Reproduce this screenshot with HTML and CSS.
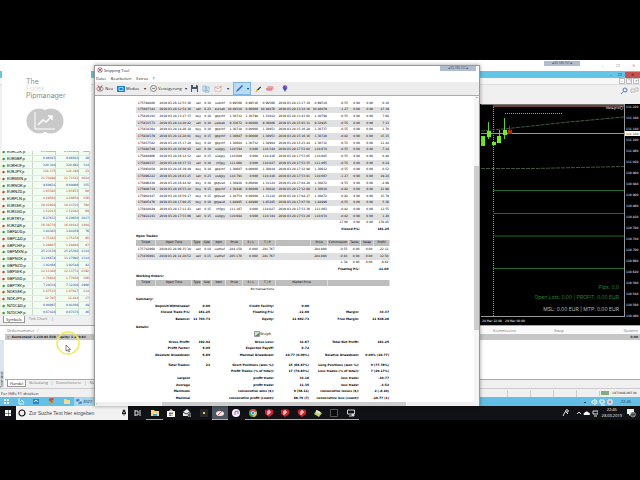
FILE: index.html
```html
<!DOCTYPE html>
<html lang="de">
<head>
<meta charset="utf-8">
<title>Snipping Tool</title>
<link rel="stylesheet" href="styles.css">
</head>
<body>
<main class="desktop">
  <section class="terminal">
    <header class="remote-bar"><button>–</button><button>❐</button><button>✕</button></header>
    <header class="app-title"><button>–</button><button>❐</button><button class="close">✕</button></header>
    <div class="app-menu"><button>–</button><button>❐</button><button>✕</button></div>
    <div class="app-tools">
      <svg width="18" height="8" viewBox="0 0 18 8" fill="none"><circle cx="4" cy="3" r="2" stroke="#5579b5"/><path d="M2.500 4.500L0 7" stroke="#5579b5"/><path d="M10 5V2h4v3h-3l-1 1M14 1h3v3h-2" stroke="#bbb"/></svg>
    </div>
    <div class="workspace">
      <aside class="watch">
        <table class="symbols"><tbody id="symbols"></tbody></table>
        <nav class="tabs"><button class="on">Symbols</button><button>Tick Chart</button><span>|</span></nav>
      </aside>
      <div class="chart"><svg id="chart" width="159" height="220" viewBox="481 104 159 220"></svg></div>
    </div>
    <div class="orders">
      <div class="orders-head"><span class="first">Ordernummer &nbsp; ⁄</span><span class="kom">Kommission</span><span class="swap">Swap</span><span class="gain">Gewinn</span></div>
      <div class="orders-sum"><b>○ &nbsp;Kontostand: 1 219.84 EUR &nbsp;Equity: 1 219.84</b><b>0.00</b></div>
      <div class="orders-body"></div>
      <nav class="tabs low"><button class="on">Handel</button><button>Belastung</button><span>|</span><button>Kontohistorie</button><span>|</span><button>Nachr</button></nav>
      <span class="side-label">Terminal</span>
    </div>
    <footer class="status"><span>For Hilfe F1 drücken</span><i></i><i></i><i></i><i></i><span class="net"><svg width="8" height="4"><path d="M0 0h8v4H0z" fill="#5d8b5d"/><path d="M1 0v4M3 0v4M5 0v4M7 0v4" stroke="#a9d0a0"/></svg> -1973946/465 kb</span></footer>
    <footer class="remote-tasks">
      <svg width="74" height="9" viewBox="0 0 74 9"><path d="M4 2h2v2H4zM7 2h2v2H7zM4 5h2v2H4zM7 5h2v2H7z" fill="#fff"/><path d="M19 1v6h5M20 5l2-2 2 3" stroke="#e8f6ff" fill="none"/><path d="M33 2h6v5h-6z" fill="#2b87c7"/><path d="M34 5l2-2 2 2" stroke="#fff" fill="none"/><circle cx="51.500" cy="4.500" r="2.500" fill="#d4a03a"/><path d="M49 4a2.500 2.500 0 0 1 5-1z" fill="#cf4b3c"/><circle cx="51.500" cy="4.500" r="1" fill="#3b79cf"/><path d="M64 2h2l1 1h3v4h-6z" fill="#f3dc8c"/></svg>
      <button><svg width="6" height="5"><path d="M0 0h4v3H0zM2 2h4v3H2z" fill="#2d6fb5" stroke="#fff" stroke-width=".5"/></svg>2027</button>
      <div class="remote-tray"><svg width="32" height="8" viewBox="0 0 32 8" fill="none" stroke="#eefaff"><path d="M1 5l1-1 1 1" stroke="#234"/><path d="M9 3v2h1l2 2V1l-2 2zM13 2q2 2 0 4M17 2h4v3h-4zM18 7h4"/><path d="M25 2h4v4h-4z" fill="#d88"/></svg><time>22:46</time></div>
    </footer>
  </section>

  <section class="logo-window">
    <h1><span>The</span><em>Forex</em><span>Pipmanager</span></h1>
    <svg width="38" height="26" viewBox="0 0 38 26"><circle cx="13" cy="13" r="12.500" fill="#c9c9c9"/><circle cx="25" cy="13" r="12.500" fill="#c9c9c9"/><path d="M9 4v17h20" stroke="#fff" fill="none"/><path d="M12 17l5-5 3 2 6-6M22 8h4v4" stroke="#fff" stroke-width="1.500" fill="none"/></svg>
  </section>
  <div class="conn far">▰ 93.180.157 ▰</div>

  <section class="snip">
    <div class="conn near">▰ 93.180.157 ▰</div>
    <header class="snip-title"><svg width="6" height="6" viewBox="0 0 6 6"><circle cx="3" cy="3" r="2.500" fill="#dfe6ee" stroke="#8fa5bb" stroke-width=".7"/><path d="M1 1l4 4M5 1L1 5" stroke="#c33" stroke-width=".8"/></svg>Snipping Tool</header>
    <nav class="snip-menu"><button>Datei</button><button>Bearbeiten</button><button>Extras</button><button>?</button></nav>
    <div class="snip-tools">
      <button class="t-neu"><svg width="8" height="9" viewBox="0 0 9 9"><ellipse cx="4.500" cy="5" rx="3.500" ry="2.500" fill="#eee" stroke="#789"/><path d="M2 1l4 6M7 1L3 7" stroke="#d44"/></svg>Neu</button>
      <button class="t-modus"><svg width="8" height="6"><path d="M0 0h8v6H0z" fill="#1583d8"/><path d="M2 1.500h4v3H2z" fill="none" stroke="#9fd5ff"/></svg>Modus<i>▾</i></button>
      <button class="t-delay"><svg width="7" height="7" viewBox="0 0 7 7" fill="none" stroke="#888"><circle cx="3.500" cy="3.500" r="3"/><path d="M2 3.500h3"/></svg>Verzögerung<i>▾</i></button>
      <button aria-label="Speichern"><svg width="7" height="7" viewBox="0 0 7 7"><path d="M0 0h6l1 1v6H0z" fill="#4c5765"/><path d="M2 0h3v2H2zM1 4h5v3H1z" fill="#dfe6ec"/></svg></button>
      <button aria-label="Kopieren"><svg width="8" height="8" viewBox="0 0 8 8" fill="#e9f4fb" stroke="#7fb2d0" stroke-width=".8"><path d="M1 1h3v5H1zM3 2h4v5H3z"/><path d="M4 4h2M4 5.500h2"/></svg></button>
      <button class="t-mail" aria-label="Senden"><svg width="9" height="7" viewBox="0 0 9 7"><path d="M1 2h6v4H1z" fill="#fff" stroke="#c9a9a9" stroke-width=".7"/><path d="M1 2l3 2 3-2M6 1l2 1" stroke="#d88" fill="none" stroke-width=".7"/></svg><i>▾</i></button>
      <button class="t-pen" aria-label="Stift"><svg width="9" height="9" viewBox="0 0 9 9"><path d="M1 8l1-2 5-5 1 1-5 5z" fill="#2c65b5"/></svg><i>▾</i></button>
      <button aria-label="Textmarker"><svg width="7" height="8" viewBox="0 0 8 8"><path d="M1 7l1-2 4-4 1 1-4 4z" fill="#222"/><path d="M1 7l1-2 1 1z" stroke="#fd3" stroke-width="1"/></svg></button>
      <button aria-label="Radierer"><svg width="8" height="5" viewBox="0 0 8 5"><path d="M2 0h5l1 2-2 3H1L0 3z" fill="#eba4b2"/><path d="M0 3h6" stroke="#c77"/></svg></button>
      <button class="t-paint" aria-label="Paint 3D"><svg width="6" height="7" viewBox="0 0 6 7"><circle cx="3" cy="2.500" r="2.300" fill="#6c4cc5"/><path d="M1 3l2 4 2-4z" fill="#3a55c8"/><path d="M3 .5L5 2 3 3z" fill="#e2457a"/></svg></button>
    </div>
    <div class="canvas">
      <article class="report" id="report"></article>
      <div class="vbar"><i>⌃</i><b></b></div>
      <div class="hbar"><i>‹</i><b></b></div>
    </div>
  </section>

  <svg class="pointer" width="26" height="26" viewBox="0 0 26 26"><circle cx="13" cy="13" r="11" fill="none" stroke="#f1ec55" stroke-width="1.500"/><path d="M11 15v6l1.500-1 1 2 1-.5-1-2h2z" fill="#fff" stroke="#333" stroke-width=".6"/></svg>

  <footer class="taskbar">
    <button class="start" aria-label="Start"><svg width="6" height="6"><path d="M0 0h3v3H0zM3.500 0h2.500v3H3.500zM0 3.500h3v2.500H0zM3.500 3.500h2.500v2.500H3.500z" fill="#fff"/></svg></button>
    <label class="search"><svg width="8" height="8" viewBox="0 0 8 8"><circle cx="4" cy="4" r="3" fill="none" stroke="#111" stroke-width="1.200"/></svg><input aria-label="Suche" value="Zur Suche Text hier eingeben"><svg width="4" height="8" viewBox="0 0 4 8"><path d="M1 1h2v3H1zM0 3v2h4V3M2 5v2" fill="#222" stroke="#222" stroke-width=".5"/></svg></label>
    <div class="apps" id="apps"></div>
    <div class="tray">
      <svg width="36" height="10" viewBox="0 0 36 10" fill="none" stroke="#ddd"><circle cx="5" cy="3" r="1.300"/><path d="M3 4l-2 4M3 3l3 3M15 6l2-2 2 2"/><path d="M22 7h5.500a1.500 1.500 0 0 0-1-2.500 2 2 0 0 0-3.500 0A1.500 1.500 0 0 0 22 7z" fill="#fff" stroke="none"/><path d="M31 3h5v3h-5zM32 8h3"/></svg>
      <time>22:45<br>28.03.2019</time>
      <svg width="10" height="10" viewBox="0 0 10 10"><path d="M1 1h7v5H5L3 8V6H1z" fill="#eee"/><circle cx="7" cy="6.500" r="2.500" fill="#555" stroke="#ddd" stroke-width=".5"/></svg>
    </div>
  </footer>
</main>
<script src="app.js"></script>
</body>
</html>
```
FILE: styles.css
```css
* { box-sizing: border-box; }
body { margin: 0; background: #000; color: #222; font: 4px/5px "Open Sans", "Liberation Sans", sans-serif; }
button { font: inherit; color: inherit; background: none; border: 0; padding: 0; margin: 0; display: flex; align-items: center; justify-content: center; gap: 1px; white-space: nowrap; }
svg { display: block; flex: none; }
i { font-style: normal; }
table { border-collapse: collapse; table-layout: fixed; width: 100%; }
td, th { padding: 0; white-space: nowrap; }

.desktop { position: relative; padding-top: 60px; }
.terminal { display: flex; flex-direction: column; background: #f0f0f0; }
.terminal > * { display: flex; align-items: center; }
.remote-bar { height: 11px; background: #fff; justify-content: flex-end; gap: 12px; padding: 0 5px; color: #888; }
.app-title { height: 7px; background: #63c5e7; justify-content: flex-end; gap: 1px; }
.app-title button { width: 8px; height: 6px; color: #123; }
.app-title .close { width: 15px; background: #c75050; color: #311; }
.app-menu { height: 7px; background: #f7f7f7; border-bottom: 1px solid #ddd; justify-content: flex-end; padding-right: 1px; gap: 1px; }
.app-menu button { width: 6px; height: 6px; background: #fff; border: 1px solid #bbb; font-size: 3px; }
.app-tools { height: 19px; justify-content: flex-end; align-items: flex-start; padding: 2px 1px; }
.terminal .workspace { align-items: stretch; background: #000; }
.watch { width: 94px; flex: none; background: #f0f0f0; padding: 45px 4px 0 1px; display: flex; flex-direction: column; }
.symbols { height: 167px; background: #f2fdf1; border-right: 1px solid #aaa; }
.symbols td { border-bottom: 1px solid #dcebdc; border-right: 1px solid #cfd6cf; text-align: right; font: 3px/5px "DejaVu Sans", sans-serif; }
.symbols td:last-child { width: 12%; }
.symbols .up td { color: #1a35b0; }
.symbols .down td { color: #c03018; }
.symbols tr td:first-child { text-align: left; width: 36%; padding-left: 1px; color: #111; font: 4px/5px Roboto, "Liberation Sans", sans-serif; }
.symbols i { color: #2a9a3c; padding-right: 2px; }
.symbols .down i { color: #c5442c; }
.tabs { height: 9px; display: flex; gap: 4px; align-items: flex-start; padding-left: 2px; color: #777; }
.tabs .on { background: #fff; border: 1px solid #999; border-top: 0; color: #222; height: 7px; padding: 0 2px; }
.chart { flex: 1; display: flex; justify-content: flex-end; }

.terminal .orders { display: block; position: relative; background: #fff; padding-left: 5px; border-top: 1px solid #aaa; }
.orders-head { display: grid; grid-template-columns: 1fr 38px 48px 74px; height: 8px; align-items: center; background: #fafafa; color: #777; text-align: right; padding-left: 2px; }
.orders-head span { padding-right: 2px; }
.orders-head .first { text-align: left; }
.orders-sum { display: flex; justify-content: space-between; align-items: center; height: 6px; background: #c6c6c6; padding: 0 2px; font: 3px/5px "DejaVu Sans", sans-serif; }
.orders-body { height: 39px; }
.tabs.low { background: #f0f0f0; border-top: 1px solid #aaa; height: 9px; gap: 3px; }
.side-label { position: absolute; left: 0; bottom: 0; width: 4px; height: 48px; writing-mode: vertical-rl; transform: rotate(180deg); line-height: 4px; background: #dce4ee; }
.status { height: 9px; border-top: 1px solid #ccc; padding: 0 0 0 1px; }
.status span:first-child { flex: 1; }
.status i { width: 23px; height: 7px; border-left: 1px solid #ccc; }
.status .net { display: flex; align-items: center; gap: 2px; border-left: 1px solid #ccc; padding-left: 1px; font: 3px/5px "DejaVu Sans", sans-serif; width: 41px; white-space: nowrap; }
.remote-tasks { height: 9px; background: #63bfe6; }
.remote-tasks button { width: 64px; height: 9px; background: #9fd6ef; justify-content: flex-start; color: #124; padding-left: 2px; }
.remote-tray { display: flex; align-items: center; margin-left: auto; gap: 6px; padding-right: 9px; color: #234; }

.logo-window { position: absolute; left: 2px; top: 60px; width: 89px; height: 91px; background: #fff; padding: 18px 0 0 24px; }
.logo-window h1 { margin: 0 0 9px; font: 400 7px/7px Inter, sans-serif; color: #8a8a8a; display: grid; }
.logo-window em { font-style: normal; color: #ddd; }
.conn { position: absolute; width: 36px; height: 5px; background: #aebdd0; color: #34496a; line-height: 5px; font-size: 3px; text-align: center; white-space: nowrap; }
.conn.far { right: 60px; top: 61px; }
.conn.near { right: 3px; top: 0; }

.snip { position: absolute; inset: 65px 25% 14px 94px; display: flex; flex-direction: column; background: #fff; border: 1px solid #999; border-bottom: 0; box-shadow: 0 0 4px rgba(0, 0, 0, .4); }
.snip-title { display: flex; align-items: center; height: 8px; gap: 1px; padding-left: 2px; }
.snip-menu { display: flex; height: 8px; gap: 5px; padding-left: 1px; align-items: center; }
.snip-tools { display: flex; align-items: center; height: 14px; background: #ececec; border-bottom: 1px solid #aaa; gap: 4px; padding-left: 1px; }
.t-neu { width: 17px; }
.t-modus { width: 29px; }
.t-delay { width: 37px; }
.t-mail { width: 15px; }
.snip-tools i { margin-left: auto; }
.snip-tools .t-pen { background: #b9dcf5; border: 1px solid #7fb7e3; height: 13px; width: 18px; padding: 0 1px; }
.t-paint { margin-left: 4px; }
.canvas { flex: 1; min-height: 0; display: grid; grid-template-columns: 1fr 5px; grid-template-rows: 1fr 4px; }
.report { padding: 4px 84px 0 41px; min-height: 0; }
.vbar { background: #f4f4f4; text-align: center; color: #555; }
.vbar i { display: block; height: 5px; }
.vbar b { display: block; height: 164px; margin-top: 65px; background: #cdcdcd; }
.hbar { grid-column: 1 / 3; background: #f0f0f0; display: flex; color: #333; line-height: 4px; }
.hbar i { width: 67px; padding-left: 1px; }
.hbar b { width: 244px; background: #cdcdcd; }

.report table { font: 3px/5px "DejaVu Sans", sans-serif; color: #000; }
.report td { text-align: right; padding-right: 1px; }
.report .gray td { background: #e0e0e0; }
.report .head th { background: #bdbdbd; text-align: center; font-weight: 400; border-right: 1px solid #ddd; }
.report .left { text-align: left; font-weight: 700; }
.report .mid { text-align: center; }
.report .bold td, .report .stats td { font-weight: 700; }
.report .closed { height: 133px; }
.report .open { height: 60px; }
.report .summary { height: 27px; margin-top: 3px; }
.report .details { height: 14px; margin-top: 2px; }
.report .gross { height: 20px; }
.report .totals { height: 40px; margin-top: 3px; }
.graph { display: inline-flex; align-items: center; font: 4px/5px "Open Sans", sans-serif; }

.pointer { position: absolute; left: 55px; top: 330px; }
.taskbar { display: flex; height: 14px; background: #101216; align-items: stretch; color: #fff; }
.start { width: 16px; }
.search { display: flex; align-items: center; width: 112px; background: #f2f2f2; padding: 0 2px; gap: 3px; }
.search input { flex: 1; min-width: 0; border: 0; padding: 0; background: none; color: #444; font: 5px/8px "Liberation Sans", sans-serif; }
.apps { display: flex; width: 231px; padding-left: 2px; }
.apps button { flex: 1; border-bottom: 1px solid transparent; }
.apps .run { border-color: #76b9ed; }
.apps .active { background: #4b5660; }
.tray { margin-left: auto; display: flex; align-items: center; gap: 4px; padding-right: 4px; text-align: center; line-height: 6px; }
.chart text { font: 3px "DejaVu Sans", sans-serif; fill: #fff; }
.chart .info { font: 5px Inter, sans-serif; text-anchor: end; fill: #238436; }
.chart .muted { fill: #bbb; }
```
FILE: app.js
```js
const byId = id => document.getElementById(id);

const symbols = `EURCZK.p|25.81830|25.81950|620|u
EURGBP.p|0.86015|0.86043|28|u
EURHUF.p|320.348|320.662|314|u
EURJPY.p|124.175|124.198|23|d
EURMXN.p|21.70498|21.71522|1024|d
EURNOK.p|9.69631|9.69986|355|u
EURNZD.p|1.65593|1.65653|60|d
EURPLN.p|4.29502|4.29658|156|d
EURSEK.p|10.42928|10.43722|794|d
EURSGD.p|1.52213|1.52282|69|d
EURTRY.p|6.27633|6.29650|2017|u
EURZAR.p|16.38778|16.40182|1404|d
GBPAUD.p|1.84383|1.84459|76|u
GBPCAD.p|1.75183|1.75278|95|d
GBPCHF.p|1.29807|1.29894|87|d
GBPMXN.p|25.23178|25.25302|2124|u
GBPNOK.p|11.26678|11.27992|1314|u
GBPNZD.p|1.92466|1.92548|82|u
GBPSEK.p|12.11380|12.13772|2392|d
GBPSGD.p|1.76932|1.77038|106|d
GBPTRY.p|7.29334|7.32300|2966|u
NOKSEK.p|1.07533|1.07647|114|d
NOKJPY.p|12.797|12.814|17|d
NZDCAD.p|0.90997|0.91046|49|u
NZDCHF.p|0.67428|0.67474|46|u`;
byId("symbols").innerHTML = symbols.split("\n").map(line => {
  const [name, bid, ask, spread, dir] = line.split("|");
  return `<tr class="${dir === "u" ? "up" : "down"}"><td><i>◆</i>${name}</td><td>${bid}</td><td>${ask}</td><td>${spread}</td></tr>`;
}).join("");

const trades = `175794800|12:53:36|sell|0.10|usdchf|0.99566|0.99516|0.99566|13:17:10|0.99510|-0.55|0.10
175807344|12:54:36|sell|0.23|eursek|10.49318|0.00000|10.49476|13:34:16|10.48079|-1.27|27.19
175816102|13:27:37|buy|0.10|gbpchf|1.30712|1.30798|1.31012|13:43:02|1.30798|-0.55|7.68
175831573|14:20:42|sell|0.10|usdsek|9.33672|0.00000|9.30086|15:03:31|9.32925|-0.55|7.13
175834364|14:26:18|buy|0.10|gbpchf|1.30718|0.00000|1.30951|15:16:28|1.30737|-0.55|1.70
175838379|14:28:01|buy|0.15|gbpchf|1.30607|0.00000|1.30951|15:16:16|1.30720|-0.82|15.15
175857582|15:17:28|buy|0.10|gbpchf|1.30604|1.30732|1.30904|15:23:44|1.30732|-0.55|11.44
175880749|16:08:02|sell|0.10|usdjpy|110.594|0.000|110.344|17:53:02|110.674|-0.55|-7.24
175884966|16:14:52|sell|0.15|usdjpy|110.689|0.000|110.416|17:53:05|110.685|-0.55|0.48
175889337|16:37:33|sell|0.10|chfjpy|111.068|0.000|110.827|17:53:35|111.065|-0.55|0.24
175893859|16:39:49|buy|0.10|gbpchf|1.30607|0.00000|1.30818|17:32:08|1.30612|-0.55|0.52
175896222|16:43:25|sell|0.23|usdjpy|110.791|0.000|110.416|17:53:01|110.667|-1.27|19.24
175896430|16:44:02|buy|0.10|gbpusd|1.30928|0.00000|1.31124|17:04:28|1.30872|-0.55|-4.99
175908719|16:53:24|buy|0.15|gbpchf|1.30446|0.00000|1.30818|17:32:08|1.30610|-0.82|21.98
175902447|16:59:17|buy|0.15|gbpusd|1.30754|0.00000|1.31124|17:04:27|1.30872|-0.82|15.79
175905476|17:00:25|buy|0.10|gbpaud|1.84905|1.84990|1.85285|17:07:50|1.84990|-0.55|5.36
175918029|17:11:43|sell|0.15|chfjpy|111.167|0.000|110.827|17:53:36|111.063|-0.82|12.55
175922243|17:53:06|sell|0.15|usdjpy|110.684|0.000|110.344|17:53:20|110.674|-0.82|1.20`;
const widths = [20, 36, 10, 10, 14, 17, 16, 17, 35, 17, 21, 12, 13, 16];
const group = list => `<colgroup>${list.map(w => `<col style="width:${w / 2.54}%">`).join("")}</colgroup>`;
const row = (cells, cls = "") => `<tr class="${cls}">${cells.map(c => `<td>${c}</td>`).join("")}</tr>`;
const total = (cells, cls = "") => `<tr class="${cls}"><td colspan="10"></td>${cells.map(c => `<td>${c}</td>`).join("")}</tr>`;
const label = (text, value) => `<tr class="bold"><td colspan="12">${text}</td><td colspan="2">${value}</td></tr>`;
const title = text => `<tr><td class="left" colspan="14">${text}</td></tr>`;
const th = list => `<tr class="head">${list.map(t => `<th>${t}</th>`).join("")}`;
const closed = trades.split("\n").map((line, n) => {
  const [id, start, type, size, item, price, sl, tp, end, close, fee, profit] = line.split("|");
  return row([id, "2019.03.28 " + start, type, size, item, price, sl, tp, "2019.03.28 " + end, close, fee, "0.00", "0.00", profit], n % 2 ? "gray" : "");
}).join("");
const names = ["Ticket", "Open Time", "Type", "Size", "Item", "Price", "S / L", "T / P"];
const stats = (cls, list) => `<table class="stats ${cls}">${group([55, 20, 64, 35, 50, 30])}${list.map(r => Array.isArray(r) ? row(r) : r).join("")}</table>`;
const heading = text => `<tr><td class="left" colspan="6">${text}</td></tr>`;

byId("report").innerHTML =
  `<table class="closed">${group(widths)}${closed}${total(["-17.60", "0.00", "0.00", "178.85"])}${label("Closed P/L:", "161.25")}</table>` +
  `<table class="open">${group(widths)}${title("Open Trades:")}` +
  th([...names, "", "Price", "Commission", "Taxes", "Swap", "Profit"]) + "</tr>" +
  row(["175742960", "2019.03.28 09:35:38", "sell", "0.10", "usdhuf", "284.150", "0.000", "281.767", "", "284.890", "-0.55", "0.00", "0.00", "-22.12"]) +
  row(["175836901", "2019.03.28 14:28:52", "sell", "0.15", "usdhuf", "285.170", "0.000", "281.767", "", "284.890", "-0.83", "0.00", "0.00", "12.50"], "gray") +
  total(["-1.38", "0.00", "0.00", "-9.62"]) + label("Floating P/L:", "-11.00") + title("Working Orders:") +
  th(names) + `<th colspan="2">Market Price</th><th colspan="4"></th></tr><tr><td class="mid" colspan="14">No transactions</td></tr></table>` +
  stats("summary", [heading("Summary:"), ["Deposit/Withdrawal:", "0.00", "Credit Facility:", "0.00", "", ""], ["Closed Trade P/L:", "161.25", "Floating P/L:", "-11.00", "Margin:", "44.47"], ["Balance:", "11 703.73", "Equity:", "11 692.73", "Free Margin:", "11 648.26"]]) +
  stats("details", [heading("Details:"), `<tr><td class="mid" colspan="6"><span class="graph"><svg width="6" height="6"><path d="M.5.5h5v5h-5z" fill="#cde" stroke="#999"/><path d="M1 5l4-3v3z" fill="#4a9a4a"/></svg>Graph</span></td></tr>`]) +
  stats("gross", [["Gross Profit:", "192.92", "Gross Loss:", "31.67", "Total Net Profit:", "161.25"], ["Profit Factor:", "6.09", "Expected Payoff:", "6.72", "", ""], ["Absolute Drawdown:", "6.89", "Maximal Drawdown:", "10.77 (0.09%)", "Relative Drawdown:", "0.09% (10.77)"]]) +
  stats("totals", [["Total Trades:", "24", "Short Positions (won %):", "15 (66.67%)", "Long Positions (won %):", "9 (77.78%)"], ["", "", "Profit Trades (% of total):", "17 (70.83%)", "Loss trades (% of total):", "7 (29.17%)"], ["Largest", "", "profit trade:", "34.16", "loss trade:", "-10.77"], ["Average", "", "profit trade:", "11.35", "loss trade:", "-4.52"], ["Maximum", "", "consecutive wins ($):", "9 (58.11)", "consecutive losses ($):", "2 (-8.10)"], ["Maximal", "", "consecutive profit (count):", "68.79 (7)", "consecutive loss (count):", "-10.77 (1)"]]);

let c = `<path d="M481 104h159v220H481z" fill="#000"/><path d="M493 104h131v3H493z" fill="#6e4040"/><path d="M481 104.500h143" stroke="#777"/>
<path d="M493.500 107v210M505 113.500h58" stroke="#999" stroke-dasharray="1 1"/>
<path d="M481 133.500h143M624.500 104v213M481 316.500h143" stroke="#999"/>
<path d="M481 131l32-3 56-6 55-5M481 168.500h53l90-2" stroke="#3d5a40" fill="none" stroke-dasharray="4 1"/>
<path d="M493 190.500h131M493 213.500h131M493 236h131M493 268.500h131" stroke="#1f6a24"/>
<path d="M488.500 122v17M499.500 130v12M504.500 118v21" stroke="#5bd31a"/><path d="M509.500 126v8" stroke="#a21"/>
<path d="M481 136h4v10h-4zM487 131h4v6h-4zM492 142h4v3h-4zM497 136h4v7h-4zM503 130h4v5h-4z" fill="#6cf018"/><path d="M508 130h4v4h-4z" fill="#c8200e"/>
<text x="606" y="109">Metagrid</text><circle cx="621.500" cy="108" r="1.500" fill="none" stroke="#ddd" stroke-width=".5"/>`;
for (let k = 0; k < 20; k++) c += `<text x="626" y="${108 + 11 * k}">${(111.22 - k * 0.04).toFixed(3)}</text>`;
c += `<path d="M625 131h15v5h-15z" fill="#fff"/><text x="626" y="135" style="fill:#222">111.120</text>
<text x="482" y="322">28 Mar 22:00</text><text x="505" y="322">29 Mar 00:00</text>
<text class="info" x="619" y="289">Pips: 0.0</text><text class="info" x="619" y="299">Open Lots: 0.00 | PROFIT: 0.00 EUR</text><text class="info muted" x="619" y="311">MSL: 0.00 EUR | MTP: 0.00 EUR</text>`;
byId("chart").innerHTML = c;

const pic = {
  tasks: ["Aktive Anwendungen", `<path d="M1 1v6M1 2h3v4H1M6 1v6" stroke="#ddd" fill="none"/>`],
  files: ["Explorer", `<path d="M0 1h3l1 1h4v5H0z" fill="#f7d774"/><path d="M2 5h4v2H2z" fill="#4aa3df"/>`, "run"],
  store: ["Store", `<path d="M0 2h8v6H0z" fill="#fff"/><path d="M3 2V1h2v1" stroke="#fff" fill="none"/><path d="M2 3.500h2v1.500H2z" fill="#e33"/><path d="M4 3.500h2v1.500H4z" fill="#3a3"/><path d="M2 5.500h2v1.500H2z" fill="#28d"/><path d="M4 5.500h2v1.500H4z" fill="#fb2"/>`],
  mail: ["Mail", `<path d="M0 3l4-3 3 3v4H0z" fill="#eee"/><path d="M0 3l3 2 4-2" stroke="#333" fill="none"/><circle cx="6.500" cy="6" r="2" fill="#555" stroke="#ccc" stroke-width=".5"/>`],
  dot: ["App", `<path d="M0 0h8v8H0z" fill="#26282c"/><path d="M3 4h2" stroke="#e8cf3a" stroke-width="2"/>`],
  snip: ["Snipping Tool", `<ellipse cx="4" cy="4.500" rx="4" ry="2.500" fill="#eee"/><path d="M2 6l4-4" stroke="#d55"/>`, "run active"],
  tunes: ["iTunes", `<circle cx="4" cy="4" r="4" fill="#f4f4ff"/><path d="M3 6V2.500l3-.5v3" stroke="#b54fc8" fill="none"/>`],
  chrome: ["Chrome", `<circle cx="4" cy="4" r="4" fill="#35a853"/><path d="M.5 2.500a4 4 0 0 1 7 0L4 3z" fill="#e8453c"/><path d="M7.500 2.500A4 4 0 0 1 4 8l1-4z" fill="#f9bb2d"/><circle cx="4" cy="4" r="1.700" fill="#4285f4" stroke="#fff" stroke-width=".6"/>`, "run"],
  pip: ["Handelsplattform", `<path d="M0 1l4-1 4 1v4L4 8 0 5z" fill="#d8202c"/><path d="M3 6V2h2v2H3" stroke="#fff" fill="none"/>`, "run"],
  editor: ["Editor", `<path d="M0 5l3-4 5 3-3 4z" fill="#b9cf6a"/><path d="M2 2l4 2" stroke="#e5e8f2" stroke-width="2"/>`, "run"],
  box: ["Konsole", `<path d="M.5.5h7v7h-7z" fill="#090909" stroke="#555"/>`, "run"],
  remote: ["Remotedesktop", `<path d="M.5 1h7v4h-7zM2 7h3" fill="none" stroke="#ccc"/><circle cx="6" cy="6" r="1.500" fill="#ddd"/>`, "run"]
};
byId("apps").innerHTML = "tasks files store mail dot snip tunes chrome pip pip pip editor box remote".split(" ").map(k =>
  `<button class="${pic[k][2] || ""}" aria-label="${pic[k][0]}"><svg width="8" height="8" viewBox="0 0 8 8">${pic[k][1]}</svg></button>`).join("");
```
